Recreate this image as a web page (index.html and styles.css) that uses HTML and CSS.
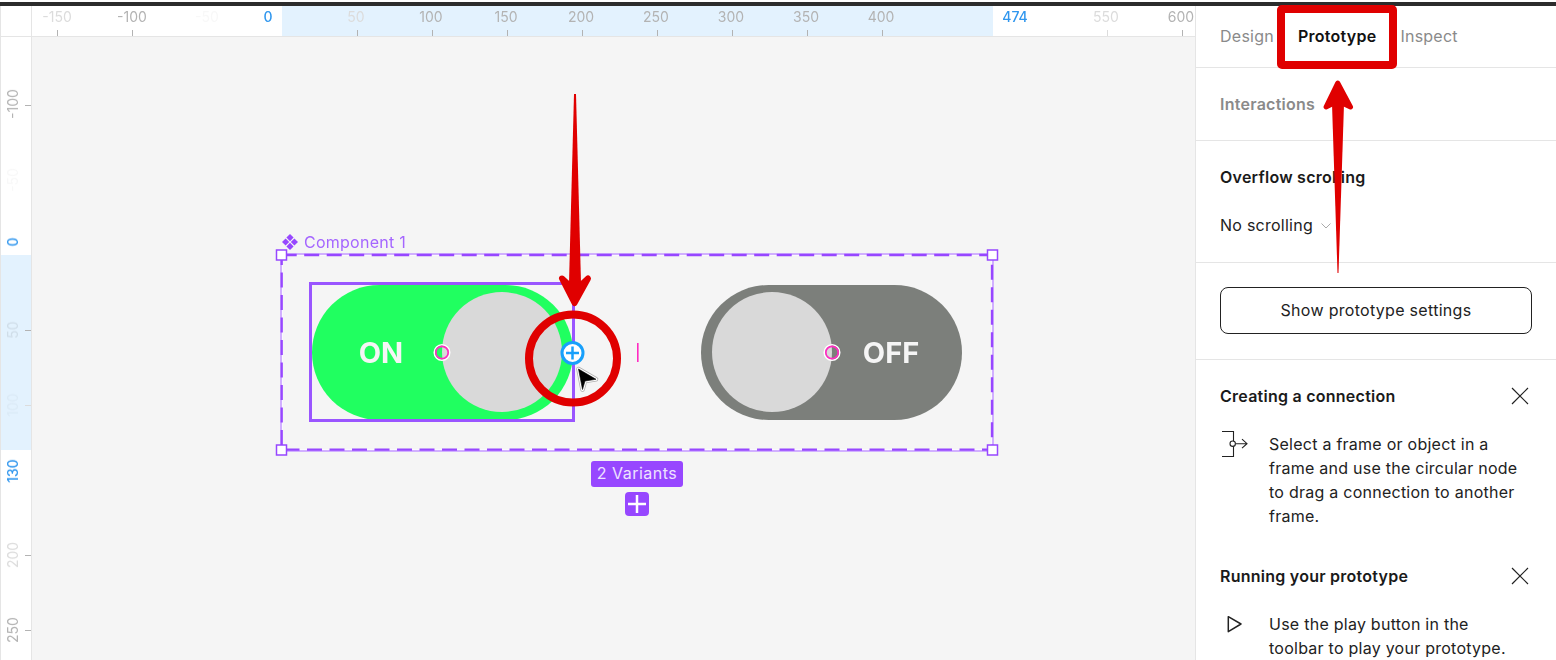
FILE: index.html
```html
<!DOCTYPE html>
<html lang="en">
<head>
<meta charset="utf-8">
<title>Prototype</title>
<link rel="stylesheet" href="styles.css">
</head>
<body>
<div class="app">
  <div class="topbar"></div>
  <div class="main">
    <div class="workspace">
      <div class="ruler-row">
        <div class="corner"></div>
        <div class="ruler-h"></div>
      </div>
      <div class="canvas-row">
        <div class="ruler-v"></div>
        <div class="canvas"></div>
      </div>
    </div>
    <aside class="panel">
      <nav class="tabs">
        <span class="tab">Design</span>
        <span class="tab tab-active">Prototype</span>
        <span class="tab">Inspect</span>
      </nav>
      <section class="sec sec-inter"><h2 class="muted-title">Interactions</h2></section>
      <section class="sec sec-overflow">
        <h2 class="title">Overflow scrolling</h2>
        <div class="select">No scrolling
          <svg class="chev" width="10" height="6" viewBox="0 0 10 6"><path d="M.5.5 5 5 9.5.5" fill="none" stroke="#aaa"/></svg>
        </div>
      </section>
      <section class="sec sec-button"><button class="btn">Show prototype settings</button></section>
      <section class="sec-help">
        <div class="help-head">
          <h2 class="title">Creating a connection</h2>
          <svg class="close" width="18" height="18" viewBox="0 0 18 18"><path d="M1 1l16 16M17 1 1 17" stroke="#222" stroke-width="1.2" fill="none"/></svg>
        </div>
        <div class="help-body">
          <span class="help-icon">
            <svg width="26" height="26" viewBox="0 0 26 26"><path d="M0 .5h11.500v25H0" fill="none" stroke="#222" stroke-width="1.100"/><path d="M14 12.700h11M20 8.200l5 4.500-5 4.500" fill="none" stroke="#222" stroke-width="1.100"/><circle cx="10.700" cy="12.700" r="2.700" fill="#fff" stroke="#222" stroke-width="1.100"/></svg>
          </span>
          <p>Select a frame or object in a frame and use the circular node to drag a connection to another frame.</p>
        </div>
        <div class="help-head help-head-next">
          <h2 class="title">Running your prototype</h2>
          <svg class="close" width="18" height="18" viewBox="0 0 18 18"><path d="M1 1l16 16M17 1 1 17" stroke="#222" stroke-width="1.2" fill="none"/></svg>
        </div>
        <div class="help-body">
          <span class="help-icon">
            <svg width="26" height="26" viewBox="0 0 26 26"><path d="M6.300 5.700v15L19 13z" fill="none" stroke="#222" stroke-width="1.500" stroke-linejoin="round"/></svg>
          </span>
          <p>Use the play button in the toolbar to play your prototype.</p>
        </div>
      </section>
    </aside>
  </div>

  <div class="art">
    <div class="band-h"></div>
    <div class="band-v"></div>

    <span class="rx f1" style="left:57px">-150</span><i class="tx f2" style="left:57px"></i>
    <span class="rx f2" style="left:132px">-100</span><i class="tx f2" style="left:132px"></i>
    <span class="rx f0" style="left:207px">-50</span>
    <span class="rx blue" style="left:268px">0</span>
    <span class="rx f1" style="left:356px">50</span><i class="tx f2" style="left:357px"></i>
    <span class="rx f2" style="left:431px">100</span><i class="tx f2" style="left:432px"></i>
    <span class="rx f2" style="left:506px">150</span><i class="tx f2" style="left:507px"></i>
    <span class="rx f2" style="left:581px">200</span><i class="tx f2" style="left:582px"></i>
    <span class="rx f2" style="left:656px">250</span><i class="tx f2" style="left:657px"></i>
    <span class="rx f2" style="left:731px">300</span><i class="tx f2" style="left:732px"></i>
    <span class="rx f2" style="left:806px">350</span><i class="tx f2" style="left:807px"></i>
    <span class="rx f2" style="left:881px">400</span><i class="tx f2" style="left:882px"></i>
    <span class="rx blue" style="left:1015px">474</span>
    <span class="rx f1" style="left:1106px">550</span><i class="tx f1" style="left:1107px"></i>
    <span class="rx f2" style="left:1181px">600</span><i class="tx f2" style="left:1182px"></i>

    <span class="ry f2" style="top:104px">-100</span><i class="ty f2" style="top:105px"></i>
    <span class="ry f0" style="top:180px">-50</span>
    <span class="ry blue" style="top:242px">0</span>
    <span class="ry f3" style="top:330px">50</span><i class="ty f2" style="top:330px"></i>
    <span class="ry f4" style="top:405px">100</span><i class="ty f1" style="top:405px"></i>
    <span class="ry blue" style="top:471px">130</span>
    <span class="ry f1" style="top:555px">200</span><i class="ty f2" style="top:555px"></i>
    <span class="ry f2" style="top:630px">250</span><i class="ty f2" style="top:630px"></i>

    <div class="comp-label">
      <svg width="16" height="16" viewBox="0 0 16 16"><path d="M8 0l3.600 3.600L8 7.200 4.400 3.600zM8 8.800l3.600 3.600L8 16l-3.600-3.600zM3.600 4.400 7.200 8l-3.600 3.600L0 8zM12.400 4.400 16 8l-3.600 3.600L8.800 8z" fill="#9747ff"/></svg>
      <span>Component 1</span>
    </div>

    <div class="pill pill-on"><span class="pill-text on-text">ON</span><div class="knob knob-on"></div></div>
    <div class="pill pill-off"><div class="knob knob-off"></div><span class="pill-text off-text">OFF</span></div>
    <div class="sel-box"></div>

    <svg class="overlay" width="1556" height="660" viewBox="0 0 1556 660">
      <rect x="281.500" y="254.500" width="711" height="196" fill="none" stroke="#fbf8ff" stroke-width="3"/>
      <rect x="281" y="254" width="712" height="197" fill="none" stroke="#a769ff" stroke-width="1"/>
      <rect x="281.700" y="255" width="710.300" height="194.700" fill="none" stroke="#9747ff" stroke-width="2.300" stroke-dasharray="15 7.500"/>
      <rect x="276.500" y="250" width="10" height="10" fill="#fff" stroke="#9747ff" stroke-width="1.500"/>
      <rect x="987.500" y="250" width="10" height="10" fill="#fff" stroke="#9747ff" stroke-width="1.500"/>
      <rect x="276.500" y="445" width="10" height="10" fill="#fff" stroke="#9747ff" stroke-width="1.500"/>
      <rect x="987.500" y="445" width="10" height="10" fill="#fff" stroke="#9747ff" stroke-width="1.500"/>
      <circle cx="442" cy="352.500" r="7.800" fill="none" stroke="#fff" stroke-width="1.500"/>
      <circle cx="442" cy="352.500" r="6.200" fill="none" stroke="#ff2bc2" stroke-width="1.700"/>
      <circle cx="832" cy="352.500" r="7.800" fill="none" stroke="#fff" stroke-width="1.500"/>
      <circle cx="832" cy="352.500" r="6.200" fill="none" stroke="#ff2bc2" stroke-width="1.700"/>
      <rect x="637" y="343" width="1.600" height="19" fill="#ff2bc2"/>
      <circle cx="572.500" cy="353" r="10.500" fill="#fff" stroke="#18a0fb" stroke-width="3"/>
      <path d="M566 353h13M572.500 346.500v13" stroke="#18a0fb" stroke-width="2.500"/>
      <path d="M578.500 369 596 379.300 585 381 582.500 389.500z" fill="none" stroke="#777" stroke-width="4.500" stroke-linejoin="round" opacity=".55"/>
      <path d="M578.500 369 596 379.300 585 381 582.500 389.500z" fill="#000" stroke="#fff" stroke-width="3" stroke-linejoin="round"/>
      <path d="M578.500 369 596 379.300 585 381 582.500 389.500z" fill="#000" stroke="#000" stroke-width=".6" stroke-linejoin="round"/>
      <circle cx="573" cy="358.500" r="44" fill="none" stroke="#e00000" stroke-width="8"/>
      <path d="M574 94h2L581 283h-12z" fill="#e00000"/>
      <path d="M581 285 588 278.500 574.500 303 562 278.500 569 285z" fill="#e00000" stroke="#e00000" stroke-width="6" stroke-linejoin="round"/>
      <path d="M1332 104h12l-5.500 169h-1z" fill="#e00000"/>
      <path d="M1337.700 83 1350.500 107 1344 104H1332L1326 107z" fill="#e00000" stroke="#e00000" stroke-width="5" stroke-linejoin="round"/>
      <rect x="1281" y="9" width="112" height="56" rx="1" fill="none" stroke="#e00000" stroke-width="8"/>
    </svg>

    <div class="variants">2 Variants</div>
    <div class="add-variant">
      <svg width="24" height="24" viewBox="0 0 24 24"><path d="M12 3v18M3 12h18" stroke="#fff" stroke-width="2.500"/></svg>
    </div>
  </div>
</div>
</body>
</html>
```

FILE: styles.css
```css
* { box-sizing: border-box; }
html, body { margin: 0; padding: 0; background: #fff; }
body { font-family: Inter, "Liberation Sans", sans-serif; color: #1e1e1e; overflow: hidden; }
.app { position: relative; width: 1556px; height: 660px; overflow: hidden; }
.topbar { height: 6px; border-top: 2px solid #fff; background: #2c2c2c; }
.main { display: flex; height: 654px; }
.workspace { flex: 1; display: flex; flex-direction: column; min-width: 0; }
.ruler-row { display: flex; height: 31px; border-bottom: 1px solid #e5e5e5; }
.corner { width: 32px; border-left: 1px solid #e5e5e5; border-right: 1px solid #e5e5e5; }
.ruler-h { flex: 1; }
.canvas-row { flex: 1; display: flex; }
.ruler-v { width: 32px; border-left: 1px solid #e5e5e5; border-right: 1px solid #e5e5e5; }
.canvas { flex: 1; background: #f5f5f5; }

.panel { width: 361px; flex: none; border-left: 1px solid #e5e5e5; font-size: 16px; line-height: 24px; letter-spacing: .25px; overflow: hidden; background: #fff; }
.tabs { display: flex; height: 62px; padding: 18px 0 0 24px; border-bottom: 1px solid #e5e5e5; }
.tab { color: #8a8a8a; margin-right: 24px; }
.tab-active { color: #111; font-weight: 600; }
.sec { border-bottom: 1px solid #e5e5e5; padding: 0 24px; }
.sec-inter { height: 73px; padding-top: 24px; }
.sec-overflow { height: 122px; padding-top: 24px; }
.sec-button { height: 97px; padding-top: 24px; }
h2 { margin: 0; font-size: 16px; line-height: 24px; font-weight: 600; }
.muted-title { color: #8a8a8a; }
.title { color: #1a1a1a; }
.select { display: flex; align-items: center; gap: 8px; margin-top: 24px; color: #222; }
.chev { margin-top: 1px; }
.btn { display: block; width: 312px; height: 47px; border: 1px solid #222; border-radius: 8px; background: #fff; font: 16px/24px Inter, "Liberation Sans", sans-serif; letter-spacing: .3px; color: #222; padding: 0 0 2px; }
.sec-help { padding: 24px 24px 0; }
.help-head { display: flex; justify-content: space-between; align-items: center; padding-right: 3px; }
.help-head-next { margin-top: 36px; }
.help-body { display: flex; margin-top: 24px; gap: 21px; }
.help-icon { width: 26px; height: 26px; flex: none; margin-top: -1px; margin-left: 2px; }
.help-body p { margin: 0; color: #222; width: 258px; }

.art { position: absolute; inset: 0; pointer-events: none; }
.band-h { position: absolute; left: 282px; top: 6px; width: 711px; height: 30px; background: #e3f2fe; }
.band-v { position: absolute; left: 1px; top: 255px; width: 30px; height: 195px; background: #e3f2fe; }
.rx, .ry { position: absolute; font-size: 14px; line-height: 16px; white-space: nowrap; filter: blur(.45px); }
.rx { top: 9px; transform: translateX(-50%); }
.ry { left: 13px; transform: translate(-50%, -50%) rotate(-90deg); }
.f0 { color: #f8f8f8; }
.f1 { color: #dcdcdc; }
.f2 { color: #b3b3b3; }
.f3 { color: #cfdde8; }
.f4 { color: #dbeaf6; }
.blue { color: #2f96ee; font-weight: 500; }
.tx, .ty { position: absolute; background: #b3b3b3; }
.tx { top: 30px; width: 1px; height: 6px; }
.ty { left: 25px; width: 6px; height: 1px; }
.tx.f1, .ty.f1 { background: #dcdcdc; }

.comp-label { position: absolute; left: 282px; top: 233px; display: flex; align-items: center; gap: 6px; color: #a566ff; font-size: 16px; line-height: 18px; letter-spacing: .25px; filter: blur(.3px); }
.pill { position: absolute; top: 285px; height: 135px; width: 261px; border-radius: 68px; filter: blur(.2px); }
.pill-on { left: 312px; background: #20ff60; }
.pill-off { left: 701px; background: #7c7f7b; }
.knob { position: absolute; width: 120px; height: 120px; border-radius: 50%; background: #d9d9d9; top: 7px; }
.knob-on { left: 130px; }
.knob-off { left: 11px; }
.pill-text { position: absolute; top: 50%; transform: translate(-50%, -50%); color: #f5f5f5; font-size: 29px; line-height: 36px; font-weight: 700; }
.on-text { left: 69px; }
.off-text { left: 190px; }
.sel-box { position: absolute; left: 309px; top: 282px; width: 266px; height: 140px; border: 3px solid #9a55ff; }
.overlay { position: absolute; left: 0; top: 0; }
.variants { position: absolute; left: 591px; top: 461px; width: 92px; height: 26px; border-radius: 3px; background: #9747ff; color: #eee2ff; font-size: 16px; line-height: 25px; letter-spacing: .5px; text-align: center; }
.add-variant { position: absolute; left: 625px; top: 492px; width: 24px; height: 24px; border-radius: 4px; background: #9747ff; display: flex; }
```
